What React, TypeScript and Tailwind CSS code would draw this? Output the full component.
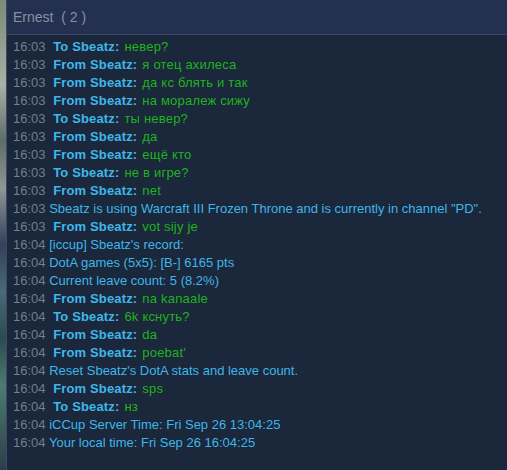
import React from 'react';

// --- DATA ---
type Line =
  | { time: string; kind: 'to' | 'from'; text: string }
  | { time: string; kind: 'info'; text: string };

const LINES: Line[] = [
  { time: '16:03', kind: 'to', text: 'невер?' },
  { time: '16:03', kind: 'from', text: 'я отец ахилеса' },
  { time: '16:03', kind: 'from', text: 'да кс блять и так' },
  { time: '16:03', kind: 'from', text: 'на моралеж сижу' },
  { time: '16:03', kind: 'to', text: 'ты невер?' },
  { time: '16:03', kind: 'from', text: 'да' },
  { time: '16:03', kind: 'from', text: 'ещё кто' },
  { time: '16:03', kind: 'to', text: 'не в игре?' },
  { time: '16:03', kind: 'from', text: 'net' },
  { time: '16:03', kind: 'info', text: 'Sbeatz is using Warcraft III Frozen Throne and is currently in channel "PD".' },
  { time: '16:03', kind: 'from', text: 'vot sijy je' },
  { time: '16:04', kind: 'info', text: "[iccup] Sbeatz's record:" },
  { time: '16:04', kind: 'info', text: 'DotA games (5x5): [B-] 6165 pts' },
  { time: '16:04', kind: 'info', text: 'Current leave count: 5 (8.2%)' },
  { time: '16:04', kind: 'from', text: 'na kanaale' },
  { time: '16:04', kind: 'to', text: '6k кснуть?' },
  { time: '16:04', kind: 'from', text: 'da' },
  { time: '16:04', kind: 'from', text: "poebat'" },
  { time: '16:04', kind: 'info', text: "Reset Sbeatz's DotA stats and leave count." },
  { time: '16:04', kind: 'from', text: 'sps' },
  { time: '16:04', kind: 'to', text: 'нз' },
  { time: '16:04', kind: 'info', text: 'iCCup Server Time: Fri Sep 26 13:04:25' },
  { time: '16:04', kind: 'info', text: 'Your local time: Fri Sep 26 16:04:25' },
];

function ChatLine({ line }: { line: Line }) {
  return (
    <div className="h-[18px] leading-[18px] whitespace-nowrap">
      <span className="text-[#737e8e]">{line.time}</span>{' '}
      {line.kind === 'info' ? (
        <span className="text-[#3fb6ea]">{line.text}</span>
      ) : (
        <>
          <span className="font-bold text-[#3fb6ea] ml-[4px] tracking-[0.15px]">
            {line.kind === 'to' ? 'To Sbeatz:' : 'From Sbeatz:'}
          </span>
          <span className="text-[#1fb320] ml-[5px] tracking-[0.2px]">{line.text}</span>
        </>
      )}
    </div>
  );
}

export default function App() {
  return (
    <div className="w-[507px] h-[470px] flex overflow-hidden font-['Liberation_Sans',Arial,sans-serif]">
      {/* wallpaper behind the window */}
      <div className="w-[6px] shrink-0 bg-[linear-gradient(180deg,#7d8a78_0%,#a9b0a4_18%,#5e6c6a_30%,#8e9896_40%,#34405a_52%,#4a6a78_62%,#2c4a52_72%,#4d7a72_82%,#2c3e48_100%)]" />
      <div className="w-px shrink-0 bg-[#3a4a68]" />

      <div className="flex-1 flex flex-col min-w-0">
        {/* header */}
        <div className="h-[35px] shrink-0 bg-[#243050] border-b border-[#3a4868] flex items-center pl-[6px]">
          <span className="text-[14px] text-[#8690a2]">Ernest&nbsp;&nbsp;( 2 )</span>
        </div>

        {/* messages */}
        <div className="flex-1 bg-[#1b273a] pt-[3px] pl-[6px] text-[13px]">
          {LINES.map((l, i) => (
            <ChatLine key={i} line={l} />
          ))}
        </div>
      </div>
    </div>
  );
}
